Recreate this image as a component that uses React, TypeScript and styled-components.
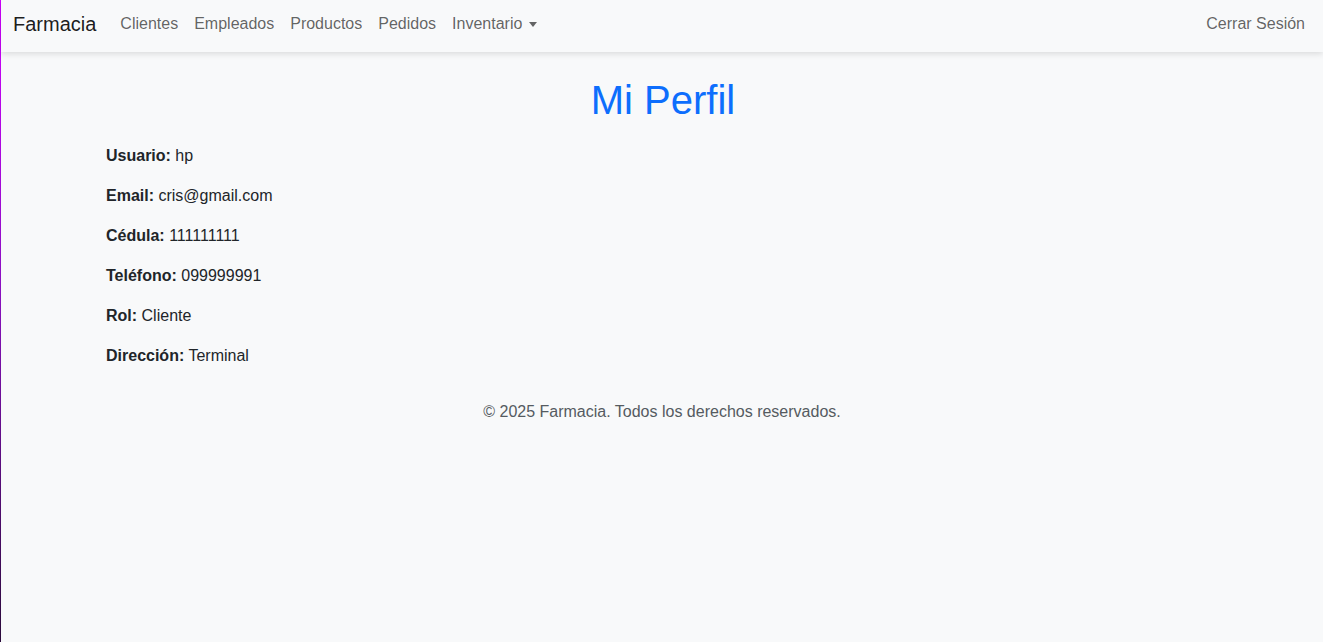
import React from "react";
import styled, { createGlobalStyle } from "styled-components";

const GlobalStyle = createGlobalStyle`
  html, body {
    margin: 0;
    padding: 0;
    background: #f8f9fa;
  }
  body {
    font-family: "Liberation Sans", Arial, sans-serif;
    font-size: 16px;
    line-height: 1.5;
    color: #212529;
  }
  * { box-sizing: border-box; }
`;

const Page = styled.div`
  min-height: 100vh;
  background: #f8f9fa;
  border-left: 1px solid transparent;
  border-image: linear-gradient(180deg, #d000ff 0%, #8a10c0 45%, #2a0a3a 100%) 1;
`;

const NavBar = styled.nav`
  position: relative;
  z-index: 1;
  height: 52px;
  display: flex;
  align-items: center;
  justify-content: space-between;
  padding: 0 10px 0 12px;
  background: #f8f9fa;
  box-shadow: 0 2px 6px rgba(0, 0, 0, 0.12);
`;

const Left = styled.div`
  display: flex;
  align-items: center;
`;

const Brand = styled.a`
  font-size: 20px;
  line-height: 30px;
  color: rgba(0, 0, 0, 0.9);
  margin-right: 16px;
  text-decoration: none;
  margin-top: -4px;
`;

const NavList = styled.div`
  display: flex;
  align-items: center;
  margin-top: -4px;
`;

const NavLink = styled.a`
  padding: 8px;
  line-height: 24px;
  color: rgba(0, 0, 0, 0.62);
  text-decoration: none;
  display: inline-flex;
  align-items: center;
`;

const Caret = styled.span`
  display: inline-block;
  margin-left: 7px;
  width: 0;
  height: 0;
  border-top: 5px solid rgba(0, 0, 0, 0.6);
  border-left: 4.5px solid transparent;
  border-right: 4.5px solid transparent;
`;

const Main = styled.main`
  max-width: 1140px;
  margin: 0 auto;
  padding: 24px 12px 0 14px;
`;

const Title = styled.h1`
  margin: 0 0 20px;
  font-size: 40px;
  font-weight: 400;
  line-height: 48px;
  text-align: center;
  color: #0d6efd;
`;

const Field = styled.p`
  margin: 0 0 16px;
  line-height: 24px;
`;

const Label = styled.strong`
  font-weight: 700;
`;

const Footer = styled.footer`
  margin-top: 32px;
  text-align: center;
  color: #555b61;
  line-height: 24px;
`;

const fields: [string, string][] = [
  ["Usuario", "hp"],
  ["Email", "cris@gmail.com"],
  ["Cédula", "111111111"],
  ["Teléfono", "099999991"],
  ["Rol", "Cliente"],
  ["Dirección", "Terminal"],
];

export default function App() {
  return (
    <>
      <GlobalStyle />
      <Page>
        <NavBar>
          <Left>
            <Brand href="#">Farmacia</Brand>
            <NavList>
              <NavLink href="#">Clientes</NavLink>
              <NavLink href="#">Empleados</NavLink>
              <NavLink href="#">Productos</NavLink>
              <NavLink href="#">Pedidos</NavLink>
              <NavLink href="#">
                Inventario
                <Caret />
              </NavLink>
            </NavList>
          </Left>
          <NavList>
            <NavLink href="#">Cerrar Sesión</NavLink>
          </NavList>
        </NavBar>
        <Main>
          <Title>Mi Perfil</Title>
          {fields.map(([k, v]) => (
            <Field key={k}>
              <Label>{k}:</Label> {v}
            </Field>
          ))}
        </Main>
        <Footer>© 2025 Farmacia. Todos los derechos reservados.</Footer>
      </Page>
    </>
  );
}
